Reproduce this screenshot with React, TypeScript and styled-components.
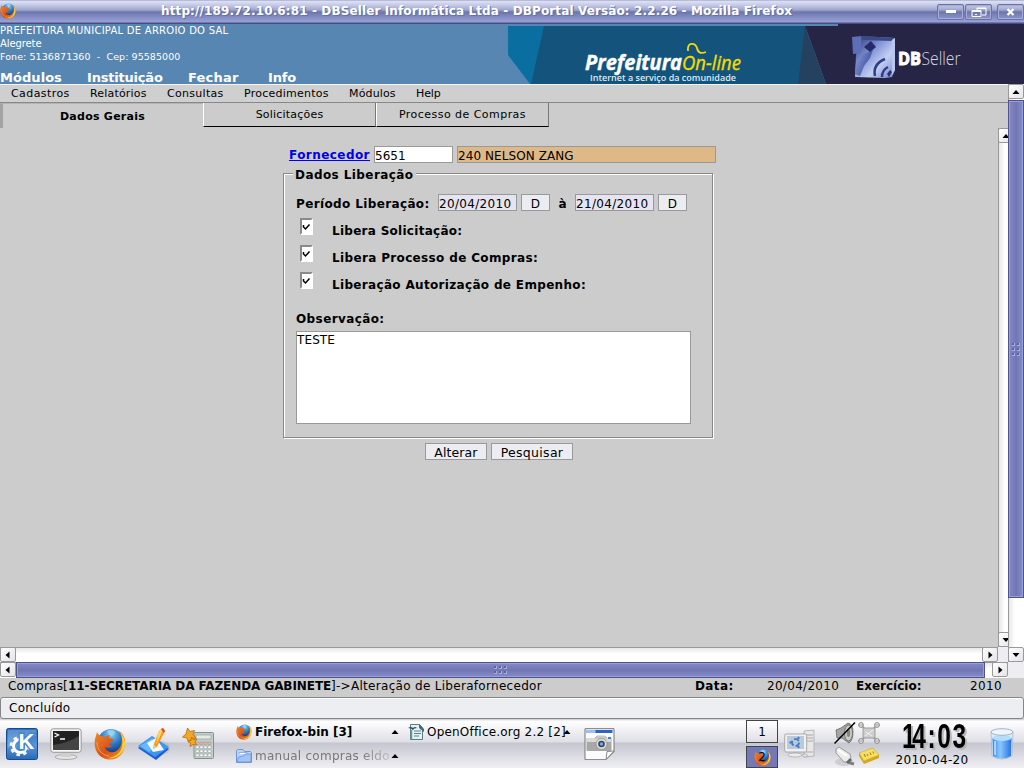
import React from 'react';
import styled, { createGlobalStyle, css } from 'styled-components';

const GlobalStyle = createGlobalStyle`
  * { box-sizing: border-box; }
  body { margin: 0; background: #ccc; font-family: "DejaVu Sans", sans-serif; color: #000; overflow: hidden; }
  svg { display: block; flex: none; }
`;

const Label = styled.span<{ $size?: number; $bold?: boolean; $ls?: number; $w?: number }>`
  display: block;
  flex: none;
  white-space: pre;
  line-height: 16px;
  font-size: ${p => p.$size ?? 12}px;
  font-weight: ${p => (p.$bold ? 700 : 400)};
  letter-spacing: ${p => p.$ls ?? 0.2}px;
  ${p => p.$w && css`width: ${p.$w}px;`}
`;

const Screen = styled.div`
  width: 1024px;
  height: 768px;
  display: flex;
  flex-direction: column;
  overflow: hidden;
`;

/* window title */
const TitleBar = styled.header`
  height: 24px;
  flex: none;
  display: flex;
  align-items: center;
  padding: 0 0 2px;
  color: #fff;
  background: linear-gradient(#8c94c4 0, #dfe2f4 1px, #c6cae6 5px, #9ea5d0 10px, #6d75a8 12px, #7a84bc 15px, #98a2d6 22px, #484c84 23px);
`;
const TitleText = styled(Label)`
  width: 740px;
  margin-left: 145px;
  text-shadow: 1px 1px 0 #6870a0;
`;
const WindowButtons = styled.div`
  margin-left: auto;
  display: flex;
  gap: 1px;
  padding-top: 2px;
`;
const WindowButton = styled.div<{ $gap?: number }>`
  width: 27px;
  height: 16px;
  margin-left: ${p => p.$gap ?? 0}px;
  border: 1px solid #6b73a6;
  border-radius: 2px;
  box-shadow: inset 1px 1px 0 #a6acd3, inset -1px -1px 0 #a6acd3;
  display: flex;
  align-items: center;
  justify-content: center;
`;

/* portal header */
const Banner = styled.div`
  height: 60px;
  flex: none;
  display: flex;
  justify-content: space-between;
  background: #5786b2;
  color: #fff;
`;
const Institution = styled.div`
  width: 480px;
  display: flex;
  flex-direction: column;
`;
const InfoLine = styled(Label)`
  line-height: 13px;
`;
const TopLinks = styled.nav`
  display: flex;
  margin-top: 7px;
`;

/* page area */
const Viewport = styled.div`
  height: 594px;
  flex: none;
  display: flex;
`;
const PageColumn = styled.div`
  width: 1008px;
  display: flex;
  flex-direction: column;
`;
const MenuBar = styled.nav`
  height: 19px;
  display: flex;
  padding: 1px 0 0 11px;
  background: #cfcfcf;
  border-top: 1px solid #f4f4f4;
  border-bottom: 1px solid #888;
`;
const TabBar = styled.div`
  height: 25px;
  display: flex;
`;
const Tab = styled.div<{ $width: number; $active?: boolean }>`
  width: ${p => p.$width}px;
  height: 24px;
  display: flex;
  justify-content: center;
  border-left: 1px solid #fff;
  border-right: 1px solid #777;
  border-bottom: 1px solid #000;
  padding-top: 4px;
  ${p => p.$active && css`
    height: 25px;
    border: 0;
    border-left: 3px solid #a4a4a4;
    border-top: 1px solid #b4b4b4;
    padding: 5px 1px 0 0;
  `}
`;
const FrameRow = styled.div`
  display: flex;
  flex: none;
  height: 519px;
`;
const Content = styled.main`
  width: 998px;
  padding: 18px 0 0 283px;
  background: #ccc;
`;

/* form */
const Row = styled.div<{ $gap?: number; $top?: number; $left?: number }>`
  display: flex;
  gap: ${p => p.$gap ?? 4}px;
  margin-top: ${p => p.$top ?? 0}px;
  padding-left: ${p => p.$left ?? 0}px;
`;
const FieldLabel = styled(Label)`
  padding-top: 2px;
`;
const LinkLabel = styled(Label)`
  padding-top: 1px;
  color: #0000ee;
  text-decoration: underline;
`;
const Field = styled.div<{ $width: number; $bg?: string }>`
  width: ${p => p.$width}px;
  height: 17px;
  padding-top: 1px;
  border: 1px solid #999;
  background: ${p => p.$bg ?? '#fff'};
`;
const Button = styled.button<{ $width: number }>`
  width: ${p => p.$width}px;
  height: 17px;
  padding: 1px 0 0;
  display: flex;
  justify-content: center;
  align-items: flex-start;
  border: 1px solid #999;
  background: #ecedf2;
  color: #000;
  font-family: inherit;
`;
const Group = styled.section`
  width: 430px;
  height: 265px;
  margin-top: 10px;
  padding-left: 12px;
  border: 1px solid #888;
  box-shadow: 1px 1px 0 #fff, inset 1px 1px 0 #fff;
`;
const Legend = styled.div`
  width: 123px;
  height: 16px;
  margin: -7px 0 0 -3px;
  padding-left: 2px;
  background: #ccc;
`;
const CheckRow = styled.div`
  height: 27px;
  display: flex;
  padding-left: 4px;
`;
const CheckBox = styled.div`
  width: 13px;
  height: 17px;
  margin-right: 19px;
  border: 2px solid;
  border-color: #8a8a8a #fff #fff #8a8a8a;
  background: #fff;
`;
const TextArea = styled.div`
  width: 395px;
  height: 93px;
  margin-top: 4px;
  border: 1px solid #999;
  background: #fff;
`;

/* scroll bars */
const VScroll = styled.div<{ $width: number }>`
  width: ${p => p.$width}px;
  height: 100%;
  flex: none;
  display: flex;
  flex-direction: column;
  overflow: hidden;
  background: linear-gradient(90deg, #999 1px, #e8e8e8 1px, #fff 7px);
`;
const HScroll = styled.div<{ $height: number }>`
  height: ${p => p.$height}px;
  flex: none;
  display: flex;
  background: linear-gradient(#999 1px, #e8e8e8 1px, #fff 7px);
`;
const ArrowBox = styled.div`
  width: 16px;
  height: 15px;
  flex: none;
  display: flex;
  align-items: center;
  justify-content: center;
  border: 1px solid #999;
  border-radius: 2px;
  background: linear-gradient(135deg, #fff, #e4e4ea);
`;
const Thumb = styled.div<{ $length: number; $vertical?: boolean }>`
  flex: none;
  display: flex;
  align-items: center;
  justify-content: center;
  border: 1px solid #4f5388;
  box-shadow: inset 0 0 0 1px #969fd6;
  ${p => p.$vertical
    ? css`height: ${p.$length}px; margin-top: 1px; background: linear-gradient(90deg, #8389c8, #7176b3 50%, #868cca);`
    : css`width: ${p.$length}px; background: linear-gradient(#8389c8, #7176b3 50%, #868cca);`}
`;
const Filler = styled.div<{ $size?: number; $corner?: boolean }>`
  flex: ${p => (p.$size ? `0 0 ${p.$size}px` : '1')};
  ${p => p.$corner && css`background: #ededf2;`}
`;

/* status */
const Breadcrumb = styled.div`
  height: 19px;
  flex: none;
  display: flex;
  padding-left: 8px;
  background: #ccc;
`;
const BrowserStatus = styled.footer`
  height: 22px;
  flex: none;
  padding: 2px 0 0 8px;
  border: 1px solid #858585;
  border-radius: 3px;
  box-shadow: inset 0 1px 0 #fff;
  background: #edeef2;
`;

/* desktop panel */
const Panel = styled.footer`
  height: 49px;
  flex: none;
  display: flex;
  background: linear-gradient(#c4c4c8 0, #fff 2px, #f8f8fa 7px, #dedee5 23px, #c6c6d0 24px, #d6d6de 34px, #f0f0f4 49px);
`;
const Launchers = styled.div`
  width: 236px;
  display: flex;
  gap: 12px;
  padding: 9px 0 0 6px;
`;
const Tasks = styled.div`
  width: 348px;
  display: grid;
  grid-template-columns: 172px 176px;
  grid-template-rows: 24px 24px;
  padding-top: 1px;
`;
const Task = styled.div`
  display: flex;
  align-items: center;
`;
const TaskLabel = styled(Label)<{ $dim?: boolean }>`
  width: 136px;
  margin-left: 3px;
  ${p => p.$dim && css`
    color: #777;
    mask-image: linear-gradient(90deg, #000 105px, transparent 145px);
  `}
`;
const Pager = styled.div`
  width: 32px;
  margin-left: 131px;
  padding-top: 1px;
  display: flex;
  flex-direction: column;
  gap: 3px;
`;
const Desk = styled.div<{ $current?: boolean }>`
  height: ${p => (p.$current ? 22 : 24)}px;
  border: 1px solid #444;
  display: grid;
  place-items: center;
  background: ${p => (p.$current ? '#7378b6' : 'transparent')};
  & > * { grid-area: 1 / 1; }
`;
const Tray = styled.div`
  width: 48px;
  margin-left: 18px;
  display: grid;
  grid-template-columns: 24px 24px;
  grid-template-rows: 24px 24px;
  padding-top: 3px;
`;
const Clock = styled.div`
  width: 76px;
  margin-left: 12px;
  padding-top: 3px;
  display: flex;
  flex-direction: column;
  align-items: center;
`;
const ClockFace = styled.svg`
  overflow: visible;
  filter: drop-shadow(2px 2px 0 #b8b8b8);
`;
const PanelIcon = styled.div<{ $left: number }>`
  margin: 9px 0 0 ${p => p.$left}px;
`;

const Arrow = ({ d }: { d: 'up' | 'down' | 'left' | 'right' }) => {
  const pts = {
    up: '0.5,6 4,2 7.5,6', down: '0.5,2 4,6 7.5,2',
    left: '5.5,0.5 1.5,4 5.5,7.5', right: '2.5,0.5 6.5,4 2.5,7.5',
  }[d];
  return <svg width="8" height="8"><polygon points={pts} /></svg>;
};

const Grip = ({ vertical }: { vertical?: boolean }) => {
  const dots: React.ReactNode[] = [];
  for (let a = 0; a < 3; a++) for (let b = 0; b < 2; b++) {
    const x = (vertical ? b : a) * 5, y = (vertical ? a : b) * 5;
    dots.push(<g key={`${a}${b}`}><rect x={x} y={y} width="3" height="3" fill="#a7aee0" /><rect x={x} y={y} width="2" height="2" fill="#5c629e" /></g>);
  }
  return <svg width={vertical ? 8 : 13} height={vertical ? 13 : 8}>{dots}</svg>;
};

const Firefox = ({ size, id }: { size: number; id: string }) => (
  <svg width={size} height={size} viewBox="0 0 32 32">
    <defs>
      <radialGradient id={`${id}g`} cx=".5" cy=".2" r=".8"><stop offset="0" stopColor="#8fd4f5" /><stop offset=".5" stopColor="#2a77c4" /><stop offset="1" stopColor="#0c2a70" /></radialGradient>
      <linearGradient id={`${id}f`} x1="0" y1="0" x2="1" y2="1"><stop offset="0" stopColor="#ee8a28" /><stop offset=".55" stopColor="#d9501a" /><stop offset="1" stopColor="#f0a020" /></linearGradient>
    </defs>
    <circle cx="17" cy="14" r="13" fill={`url(#${id}g)`} />
    <path d="M13 3q4-2 8 0l-1 4-4 1z" fill="#9edcf4" opacity=".7" />
    <path d="M3 4q-1 4-2 7C-1 23 6 31.500 16 31.500S31 24 31 14C31 9 28 5 25 3c3 5 4 10 1 16-2 4-6 6-10 5-3-1-5-3-5-5 2 1 5 1 8-1-2 0-4-1-4-3l4-2c1-2-1-3-4-3l1-3c-3 0-4 1-5 2L8 8Q4 7 3 4z" fill={`url(#${id}f)`} />
    <path d="M25 3c6 5 8 13 4 20-4 6-10 8-15 7 8-1 13-5 14-12 1-6 0-11-3-15z" fill="#ffd233" />
    <path d="M3 14c0 8 5 13 12 14" stroke="#f6a14a" fill="none" />
  </svg>
);

const BannerArt = () => (
  <svg width="516" height="60" viewBox="508 24 516 60">
    <defs>
      <linearGradient id="cube" x1="0" y1="0" x2="1" y2="1"><stop offset="0" stopColor="#2c3576" /><stop offset=".4" stopColor="#8497d8" /><stop offset=".65" stopColor="#c2cff4" /><stop offset="1" stopColor="#6f80c8" /></linearGradient>
      <linearGradient id="cube2" x1="0" y1="0" x2="1" y2=".6"><stop offset="0" stopColor="#8da2e6" /><stop offset="1" stopColor="#3a478e" /></linearGradient>
    </defs>
    <polygon points="508,26 545,26 532,84 530,84 508,55" fill="#0a6fa0" />
    <polygon points="544,26 806,26 806,84 531,84" fill="#14547c" />
    <polygon points="838,24 1024,24 1024,84 826,84 805,26 838,26" fill="#262545" />
    <polygon points="805,26 826,84 798,84" fill="#24425f" />
    <g fontFamily="'Open Sans', 'Noto Sans', sans-serif">
      <text x="585" y="69.500" fontSize="20.500" fontWeight="700" stroke="#fff" strokeWidth=".4" fontStyle="italic" fill="#fff" textLength="97" lengthAdjust="spacingAndGlyphs">Prefeitura</text>
      <text x="682" y="69.500" fontSize="20.500" fontStyle="italic" fill="#f2dc00" stroke="#f2dc00" strokeWidth=".35" textLength="59" lengthAdjust="spacingAndGlyphs">On-line</text>
      <text x="590" y="80.500" fontSize="9.500" fontWeight="600" fill="#dfeaf3" textLength="146" lengthAdjust="spacingAndGlyphs">Internet a serviço da comunidade</text>
      <text x="898" y="65" fontSize="18" fontWeight="700" fill="#fff" stroke="#fff" strokeWidth="1" textLength="23" lengthAdjust="spacingAndGlyphs">DB</text>
      <text x="921.500" y="65" fontSize="18" fontWeight="300" fill="#d8d8e4" textLength="39" lengthAdjust="spacingAndGlyphs">Seller</text>
    </g>
    <path d="M688 51c-1-9 7-9 9-3 1 5 4 6 9 4" fill="none" stroke="#f2dc00" strokeWidth="1.800" />
    <path d="M861 36l34 2v32l-3 7-7 1-30-1 1-22z" fill="url(#cube)" />
    <path d="M852 37l9-1v17l-8 1z" fill="#5f6eb8" />
    <path d="M861 36l34 2-4 3-28-1z" fill="#3c4888" />
    <path d="M861 55l12-5-3 8-6 8-4 10-5-2 1-12z" fill="url(#cube2)" />
    <path d="M864 47l7-6 5 6-6 5z" fill="#252a68" />
    <path d="M875 76c-2-9 3-14 10-17M882 77c0-4 2-8 6-10" fill="none" stroke="#323c80" strokeWidth="2.500" />
    <path d="M887 74l3-4 2 2-3 5z" fill="#2a3272" />
    <path d="M892 40l3-2v32l-3 5z" fill="#b8c6f0" />
  </svg>
);

const KMenu = () => (
  <svg width="32" height="32" viewBox="0 0 32 32">
    <defs><linearGradient id="km" x1="0" y1="0" x2="0" y2="1"><stop offset="0" stopColor="#2f6fbe" /><stop offset=".55" stopColor="#5596dc" /><stop offset="1" stopColor="#2a68b4" /></linearGradient></defs>
    <rect x=".5" y=".5" width="31" height="31" rx="2" fill="url(#km)" stroke="#174a94" />
    <path d="M2 2h28v6Q14 10 2 20z" fill="#fff" opacity=".2" />
    <circle cx="14" cy="18" r="6.500" fill="none" stroke="#fff" strokeWidth="3" />
    <circle cx="14" cy="18" r="9" fill="none" stroke="#fff" strokeWidth="2.500" strokeDasharray="3.500 3.570" />
    <text x="12.500" y="20.500" fontFamily="Liberation Sans, sans-serif" fontWeight="700" fontSize="22" fill="#fff" stroke="#4384d0" strokeWidth="3" paintOrder="stroke">K</text>
  </svg>
);

const Terminal = () => (
  <svg width="32" height="32" viewBox="0 0 32 32">
    <ellipse cx="16" cy="29" rx="11" ry="2.500" fill="#e5e5e5" stroke="#aaa" />
    <path d="M12 24h8l1 5H11z" fill="#d0d0d0" />
    <rect x=".8" y=".8" width="30.400" height="23.500" rx="2.500" fill="#f4f4f4" stroke="#999" />
    <rect x="3" y="3" width="26" height="19" fill="#222" />
    <path d="M3 17Q18 15 29 8v14H3z" fill="#444" />
    <path d="M4.500 5l4 2-4 2M10 11h5" fill="none" stroke="#fff" strokeWidth="1.300" />
  </svg>
);

const Notebook = () => (
  <svg width="32" height="32" viewBox="0 0 32 32">
    <ellipse cx="23" cy="20" rx="9" ry="7" fill="#999" opacity=".25" />
    <path d="M0 20l14-10 17 11-13 11z" fill="#1f5fd0" />
    <path d="M0 18l14-10 17 11-14 10z" fill="#3c96f2" />
    <path d="M2 18l12-8 8 5-11 9z" fill="#66baff" />
    <path d="M9 15l9-5 8 12-11 2z" fill="#f7f7ff" />
    <path d="M21 3l4-3 2 3-8 16-4 2 1-5z" fill="#f59a14" />
    <path d="M20 5l3-4 2 1-7 15z" fill="#ffd06a" />
    <path d="M16 17l3 2-4 2z" fill="#e8c9a0" /><path d="M23 1l2-1 2 3-1 2z" fill="#e0442c" />
  </svg>
);

const Calculator = () => (
  <svg width="32" height="32" viewBox="0 0 32 32">
    <rect x="12" y="4.500" width="19.500" height="26" rx="1" fill="#c2cec9" stroke="#84908c" />
    <rect x="14" y="7" width="15" height="4" fill="#e0ece4" stroke="#93a29b" strokeWidth=".7" />
    {[14, 18, 22, 26].map(y => [14, 18, 22, 26].map(x => <rect key={`${x}${y}`} x={x} y={y} width="3" height="2.500" fill={y === 14 ? '#f0b0aa' : '#fff'} stroke="#8b9793" strokeWidth=".5" />))}
    <path d="M5.500 0l2.500 3.500 4.500-1-1.500 4 3 3.500-4.500.5-2.500 4-2-4.500L.5 9l3.500-3z" fill="#f5a623" stroke="#b56d0a" strokeWidth=".8" />
    <path d="M9.500 9l2 2.500 3.500-.5-2 3 1.500 3-3.500-.5-3 2 .5-3.500-3-2 3.500-.5z" fill="#f5a623" stroke="#b56d0a" strokeWidth=".8" />
  </svg>
);

const Folder = () => (
  <svg width="16" height="16" viewBox="0 0 16 16">
    <path d="M.5 14.500v-12l1-1H7l1.500 2h6l1 1v10z" fill="#b9d3f6" stroke="#6a96d6" />
    <path d="M3 6V4.500h8V6" fill="#fff" stroke="#8db1e6" />
    <path d="M1 14l1.500-5 5-1 1.500-2h6v8z" fill="#a2c4f4" stroke="#6a96d6" strokeWidth=".8" />
  </svg>
);

const Writer = () => (
  <svg width="16" height="16" viewBox="0 0 16 16">
    <path d="M2.500.5h9l3 3v12h-12z" fill="#e6f0f0" stroke="#5c7c84" />
    <path d="M11 0l5 5v3l-5-4z" fill="#3f6b7b" />
    <path d="M0 4q3-2 5 0 2-2 4 0-3 0-4 2-2-2-5-2z" fill="#2c5564" />
    <path d="M3.500 6v9" stroke="#6f969f" strokeWidth="1.500" />
    <path d="M6 7h7M6 9.500h7M6 12h5" stroke="#5d858f" />
  </svg>
);

const Camera = () => (
  <svg width="31" height="32" viewBox="0 0 31 32">
    <path d="M1 .7h29v23l-8 8H1z" fill="#fbfbfb" stroke="#777" />
    <rect x="2.500" y="2" width="26" height="3" fill="#2864c8" /><rect x="2.500" y="2" width="9" height="3" fill="#9dc0f0" />
    <rect x="2.500" y="10" width="25" height="13" rx="1" fill="#a8a8a8" /><rect x="2.500" y="10" width="25" height="4" fill="#d9d9d9" />
    <path d="M11 10l2-2h8l2 2z" fill="#ddd" stroke="#999" strokeWidth=".6" />
    <circle cx="17.500" cy="16" r="5.500" fill="#ddd" stroke="#888" strokeWidth=".7" /><circle cx="17.500" cy="16" r="3.300" fill="#3c4454" /><circle cx="17.500" cy="16" r="1.700" fill="#69aaff" />
    <rect x="24" y="9" width="3" height="2" fill="#3f7fe8" />
    <path d="M22 31.500l1-8 7-.5z" fill="#fff" stroke="#888" />
  </svg>
);

const Computers = () => (
  <svg width="32" height="32" viewBox="0 0 32 32">
    <path d="M20 3l10-1v26l-10 1z" fill="#e7e7e7" stroke="#aaa" strokeWidth=".8" />
    <path d="M22 7h7M22 10h7M22 13h7M22 24h7" stroke="#aaa" />
    <ellipse cx="11" cy="27" rx="7" ry="2" fill="#ececec" stroke="#aaa" strokeWidth=".8" />
    <rect x=".7" y="6" width="22" height="18" rx="1.500" fill="#f0f0f0" stroke="#999" strokeWidth=".8" />
    <rect x="3" y="8" width="17" height="13" fill="#b8cbdc" />
    <circle cx="11.500" cy="14.500" r="3.500" fill="none" stroke="#4a7cc4" strokeWidth="2" strokeDasharray="5.300 2" />
    <circle cx="6.500" cy="14.500" r="1.200" fill="#4a7cc4" /><circle cx="14.500" cy="10" r="1.200" fill="#4a7cc4" /><circle cx="14.500" cy="19" r="1.200" fill="#4a7cc4" />
    <ellipse cx="21" cy="27.500" rx="2.500" ry="1.500" fill="#e4e4e4" stroke="#999" strokeWidth=".6" />
  </svg>
);

const Muted = () => (
  <svg width="22" height="22" viewBox="0 0 22 22">
    <path d="M2 8l5-2 7-5q5 1 5 9t-4 11l-7-5-5 0z" fill="#a4a6a1" stroke="#666" strokeWidth=".8" />
    <ellipse cx="14.500" cy="11" rx="4" ry="8" fill="#c9cbc6" stroke="#666" strokeWidth=".8" /><ellipse cx="14.500" cy="11" rx="1.700" ry="4" fill="#85877f" />
    <path d="M.5 21.500L21 .5" stroke="#000" strokeWidth="1.500" />
  </svg>
);

const Network = () => (
  <svg width="22" height="22" viewBox="0 0 22 22">
    <path d="M3 3l16 16M19 3L3 19" stroke="#999" strokeWidth="1.500" />
    <rect x="5" y="6" width="12" height="10" fill="#cecece" stroke="#909090" strokeWidth=".8" /><path d="M7 14l8-6M8 10l6 4" stroke="#f2f2f2" />
    {[[3, 3], [19, 3], [3, 19], [19, 19]].map(([x, y]) => <g key={`${x}-${y}`}><circle cx={x} cy={y} r="2.400" fill="#f0f0f0" stroke="#888" /><path d={`M${x - 2} ${y}h4`} stroke="#888" strokeWidth=".8" /></g>)}
  </svg>
);

const Plug = () => (
  <svg width="22" height="22" viewBox="0 0 22 22">
    <ellipse cx="10" cy="16" rx="9" ry="4" fill="#999" opacity=".3" />
    <path d="M12 13l4 4 4 1" stroke="#808080" strokeWidth="3" fill="none" />
    <path d="M2 3l3-2 11 7 1 4-4 4-3 0L2 7z" fill="#ececea" stroke="#888" strokeWidth=".8" />
    <path d="M4 4l9 6" stroke="#fff" strokeWidth="2" /><path d="M12 16l4-4 2 2-4 4z" fill="#666" />
  </svg>
);

const Note = () => (
  <svg width="22" height="22" viewBox="0 0 22 22">
    <path d="M1 7l14-5 6 7-15 6z" fill="#f6df62" stroke="#c9a21c" strokeWidth=".6" />
    <path d="M6 15l15-6v3L6 18zM1 7l5 8v3L1 10z" fill="#d3a81a" />
    <path d="M6 8l1.500 3M9 8l1 2M12 6.500l1 2.500M15 5.500l.5 2" stroke="#9a7a1c" />
  </svg>
);

const Trash = () => (
  <svg width="24" height="32" viewBox="0 0 24 32">
    <defs><linearGradient id="tr"><stop offset="0" stopColor="#2f88f0" /><stop offset=".4" stopColor="#8cc8ff" /><stop offset="1" stopColor="#2472e0" /></linearGradient></defs>
    <path d="M1 4h22l-1 24q-10 6-20 0z" fill="#dce9f6" stroke="#9fb4cc" strokeWidth=".7" />
    <path d="M2.500 10h19l-.5 18q-9 5-18 0z" fill="url(#tr)" />
    <ellipse cx="12" cy="10" rx="9.500" ry="3" fill="#b3dcff" />
    <ellipse cx="12" cy="4" rx="11" ry="3.300" fill="#eef4fb" stroke="#a4b4c6" />
    <path d="M5 13v14" stroke="#fff" strokeWidth="1.500" opacity=".7" />
  </svg>
);

const Digits = () => (
  <ClockFace width="70" height="30">
    <text transform="translate(5 26) scale(.7 1)" x="0 14.5 36.500 50.500 72" y="0" fontFamily="'Liberation Sans', sans-serif" fontWeight="700" fontSize="35">14:03</text>
  </ClockFace>
);

const topLinks: [string, number, number][] = [['Módulos', 87, 0.05], ['Instituição', 101, -0.2], ['Fechar', 80, 0.2], ['Info', 40, -0.15]];
const menus: [string, number, number][] = [['Cadastros', 79, 0.42], ['Relatórios', 77, 0.18], ['Consultas', 77, 0.3], ['Procedimentos', 105, 0.24], ['Módulos', 67, 0.15], ['Help', 40, -0.1]];
const checks: [string, number][] = [['Libera Solicitação:', 0.28], ['Libera Processo de Compras:', 0.35], ['Liberação Autorização de Empenho:', 0.33]];

export default function App() {
  return (
    <Screen>
      <GlobalStyle />
      <TitleBar>
        <Firefox size={16} id="t" />
        <TitleText $bold $ls={0.12}>http://189.72.10.6:81 - DBSeller Informática Ltda - DBPortal Versão: 2.2.26 - Mozilla Firefox</TitleText>
        <WindowButtons>
          <WindowButton><svg width="10" height="4"><rect width="10" height="3" fill="#fff" /></svg></WindowButton>
          <WindowButton>
            <svg width="16" height="11" fill="none" stroke="#fff">
              <path d="M6 3V1h9v7h-4M6 1.500h9" /><path d="M1 3.500h9v6H1zM1 4.500h9" /><path d="M4 7.500h2" />
            </svg>
          </WindowButton>
          <WindowButton $gap={4}><svg width="10" height="8"><path d="M1.500 1l6 6M7.500 1l-6 6" stroke="#fff" strokeWidth="2.200" /></svg></WindowButton>
        </WindowButtons>
      </TitleBar>
      <Banner>
        <Institution>
          <InfoLine $size={10} $ls={0.25}>PREFEITURA MUNICIPAL DE ARROIO DO SAL</InfoLine>
          <InfoLine $size={10} $ls={-0.1}>Alegrete</InfoLine>
          <InfoLine $size={9.5} $ls={0.07}>{'Fone: 5136871360  -  Cep: 95585000'}</InfoLine>
          <TopLinks>{topLinks.map(([t, w, ls]) => <Label key={t} $bold $size={13} $w={w} $ls={ls}>{t}</Label>)}</TopLinks>
        </Institution>
        <BannerArt />
      </Banner>
      <Viewport>
        <PageColumn>
          <MenuBar>{menus.map(([t, w, ls]) => <Label key={t} $size={11} $w={w} $ls={ls}>{t}</Label>)}</MenuBar>
          <TabBar>
            <Tab $width={203} $active><Label $bold $size={11} $ls={0.25}>Dados Gerais</Label></Tab>
            <Tab $width={173}><Label $size={11} $ls={0.2}>Solicitações</Label></Tab>
            <Tab $width={173}><Label $size={11} $ls={0.46}>Processo de Compras</Label></Tab>
          </TabBar>
          <FrameRow>
            <Content>
              <Row $left={6}>
                <LinkLabel $bold $ls={0.44} $w={81}>Fornecedor</LinkLabel>
                <Field $width={79}><Label $ls={0.05}>5651</Label></Field>
                <Field $width={259} $bg="#deb887"><Label $ls={0.08}>240 NELSON ZANG</Label></Field>
              </Row>
              <Group>
                <Legend><Label $bold $ls={0.42}>Dados Liberação</Label></Legend>
                <Row $top={11}>
                  <FieldLabel $bold $ls={0.37} $w={138}>Período Liberação:</FieldLabel>
                  <Field $width={79} $bg="#e6e4f1"><Label $ls={0.32}>20/04/2010</Label></Field>
                  <Button $width={29}><Label>D</Label></Button>
                  <FieldLabel $bold $w={17}>{' à'}</FieldLabel>
                  <Field $width={79} $bg="#e6e4f1"><Label $ls={0.32}>21/04/2010</Label></Field>
                  <Button $width={29}><Label>D</Label></Button>
                </Row>
                <Row $top={6} />
                {checks.map(([c, ls]) => (
                  <CheckRow key={c}>
                    <CheckBox><svg width="9" height="12"><path d="M1.500 5v2L3.500 9 7.500 4.500" fill="none" stroke="#000" strokeWidth="1.500" /></svg></CheckBox>
                    <Row $top={5}><Label $bold $ls={ls}>{c}</Label></Row>
                  </CheckRow>
                ))}
                <Row $top={12}><Label $bold $ls={0.4}>Observação:</Label></Row>
                <TextArea><Label $ls={0.11}>TESTE</Label></TextArea>
              </Group>
              <Row $top={5} $left={142}>
                <Button $width={62}><Label $size={12.5} $ls={0.1}>Alterar</Label></Button>
                <Button $width={82}><Label $size={12.5} $ls={0.3}>Pesquisar</Label></Button>
              </Row>
            </Content>
            <VScroll $width={10}>
              <ArrowBox><Arrow d="up" /></ArrowBox>
              <Filler />
              <ArrowBox><Arrow d="down" /></ArrowBox>
            </VScroll>
          </FrameRow>
          <HScroll $height={15}>
            <ArrowBox><Arrow d="left" /></ArrowBox>
            <Filler />
            <ArrowBox><Arrow d="right" /></ArrowBox>
            <Filler $size={10} $corner />
          </HScroll>
          <HScroll $height={16}>
            <ArrowBox><Arrow d="left" /></ArrowBox>
            <Thumb $length={969}><Grip /></Thumb>
            <Filler />
            <ArrowBox><Arrow d="right" /></ArrowBox>
          </HScroll>
        </PageColumn>
        <VScroll $width={16}>
          <ArrowBox><Arrow d="up" /></ArrowBox>
          <Thumb $vertical $length={498}><Grip vertical /></Thumb>
          <Filler />
          <ArrowBox><Arrow d="down" /></ArrowBox>
          <Filler $size={16} $corner />
        </VScroll>
      </Viewport>
      <Breadcrumb>
        <Label $ls={0.22} $w={60}>Compras[</Label>
        <Label $bold $ls={-0.08} $w={263}>11-SECRETARIA DA FAZENDA GABINETE</Label>
        <Label $ls={0.3} $w={364}>{']->Alteração de Liberafornecedor'}</Label>
        <Label $bold $ls={0.4} $w={72}>Data:</Label>
        <Label $ls={0.3} $w={89}>20/04/2010</Label>
        <Label $bold $ls={0} $w={114}>Exercício:</Label>
        <Label $ls={0.4}>2010</Label>
      </Breadcrumb>
      <BrowserStatus><Label $ls={0.25}>Concluído</Label></BrowserStatus>
      <Panel>
        <Launchers><KMenu /><Terminal /><Firefox size={32} id="l" /><Notebook /><Calculator /></Launchers>
        <Tasks>
          <Task><Firefox size={16} id="k" /><TaskLabel $bold $ls={0}>Firefox-bin [3]</TaskLabel><Arrow d="up" /></Task>
          <Task><Writer /><TaskLabel $ls={0.2}>OpenOffice.org 2.2 [2]</TaskLabel><Arrow d="up" /></Task>
          <Task><Folder /><TaskLabel $dim $ls={0.25}>manual compras eldo</TaskLabel><Arrow d="up" /></Task>
        </Tasks>
        <PanelIcon $left={0}><Camera /></PanelIcon>
        <Pager>
          <Desk><Label $ls={0}>1</Label></Desk>
          <Desk $current><Firefox size={17} id="p" /><Label $ls={0}>2</Label></Desk>
        </Pager>
        <PanelIcon $left={6}><Computers /></PanelIcon>
        <Tray><Muted /><Network /><Plug /><Note /></Tray>
        <Clock><Digits /><Label $ls={0.33}>2010-04-20</Label></Clock>
        <PanelIcon $left={20}><Trash /></PanelIcon>
      </Panel>
    </Screen>
  );
}
